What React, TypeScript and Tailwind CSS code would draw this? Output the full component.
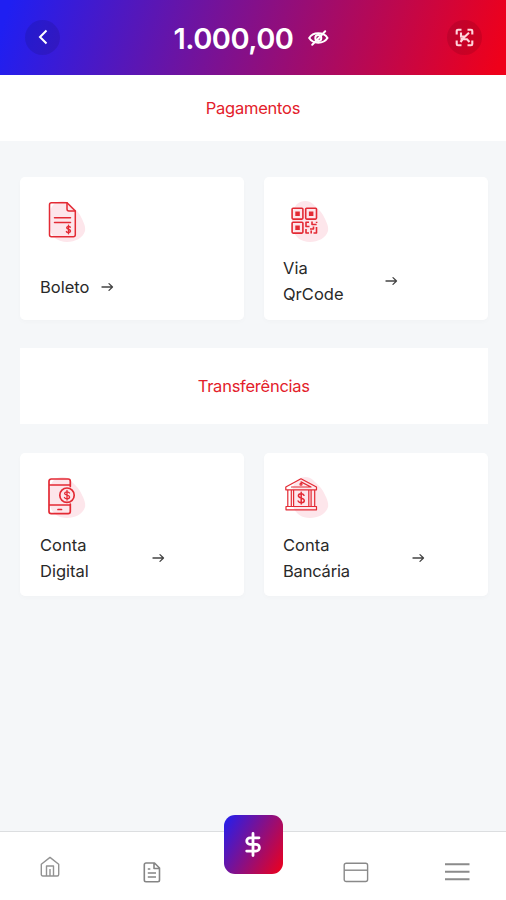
import type { ReactNode } from "react";

interface ActionCardProps {
  icon: ReactNode;
  label: ReactNode;
  labelClass: string;
  className: string;
  rowClass: string;
}

function ArrowIcon() {
  return (
    <svg width="13" height="12" viewBox="0 0 13 12" fill="none" stroke="#444" strokeWidth="1.3" strokeLinecap="round" strokeLinejoin="round">
      <path d="M1 6H11.4M8 2.6L11.5 6L8 9.4" />
    </svg>
  );
}

// soft pink shape that sits behind every card icon
function Blob() {
  return <path fill="#fde6eb" stroke="none" d="M14 7C19 3 26 3 30 7C34 11 37 13 40 18C43 24 46 29 45 34C43 41 35 45 27 45C18 45 12 40 10 33C8 26 8 13 14 7Z" />;
}

function IconFrame({ children }: { children: ReactNode }) {
  return (
    <svg width="48" height="48" viewBox="0 0 48 48" fill="none" stroke="#e32a34" strokeWidth="1.5" strokeLinecap="round" strokeLinejoin="round">
      <Blob />
      {children}
    </svg>
  );
}

function BillIcon() {
  return (
    <IconFrame>
      <path d="M11.5 5.7H27L35.3 14V37.8A2 2 0 0 1 33.3 39.8H11.5A2 2 0 0 1 9.5 37.8V7.7A2 2 0 0 1 11.5 5.7Z" />
      <path d="M27 5.7V12A2 2 0 0 0 29 14H35.3" />
      <path d="M14.5 20.8H30.5M14.5 25.6H30.5" />
      <path strokeWidth="1.4" d="M30.3 30.2C29.6 29 26.7 29 26.7 30.8C26.7 32.7 30.5 31.8 30.5 34C30.5 35.8 27.2 36 26.4 34.6M28.5 28.3V36.8" />
    </IconFrame>
  );
}

function QrIcon() {
  return (
    <IconFrame>
      <g strokeWidth="1.6">
        <rect x="9.1" y="11.3" width="10.8" height="10.8" rx="1" />
        <rect x="22.7" y="11.3" width="10.8" height="10.8" rx="1" />
        <rect x="9.1" y="25.3" width="10.8" height="10.8" rx="1" />
      </g>
      <g fill="#e32a34" stroke="none">
        <rect x="12.3" y="14.5" width="4.5" height="4.5" />
        <rect x="25.9" y="14.5" width="4.5" height="4.5" />
        <rect x="12.3" y="28.5" width="4.5" height="4.5" />
      </g>
      <path strokeWidth="1.6" strokeLinecap="butt" d="M26 25.3H23V29.5H26.5M23 32V36H26M29 24.6V27.5H33.6M33.6 24.8V26M33.5 30V36H30.5M27 32H30.5V29.5M28.2 33.5V36.6" />
    </IconFrame>
  );
}

function PhoneIcon() {
  return (
    <IconFrame>
      <path strokeWidth="1.7" d="M30.3 13.5V8.2A2.2 2.2 0 0 0 28.1 6H11.2A2.2 2.2 0 0 0 9 8.2V38.4A2.2 2.2 0 0 0 11.2 40.6H28.1A2.2 2.2 0 0 0 30.3 38.4V31M9 12H30M9 32H30M18 36.5H21.5" />
      <circle cx="27" cy="22.2" r="7.2" fill="#fde6eb" strokeWidth="1.7" />
      <path strokeWidth="1.3" d="M29.5 20C28.5 18.3 24.6 18.4 24.6 20.5C24.6 22.7 29.6 21.6 29.6 24.1C29.6 26.3 25.4 26.3 24.4 24.5M27 17.5V27" />
    </IconFrame>
  );
}

function BankIcon() {
  return (
    <IconFrame>
      <path strokeWidth="1.2" d="M2.8 14L18 5.8L33.5 14V16.8H2.8ZM8.5 14H28L18 8.9M3 33.5H33.5V36.8H3ZM4.8 16.8V33.3M8.3 16.8V33.3M10.6 16.8V33.3M25.8 16.8V33.3M28.1 16.8V33.3M31.7 16.8V33.3" />
      <circle cx="18" cy="11.2" r="1" strokeWidth="1.2" />
      <path strokeWidth="1.5" d="M21 22.3C19.8 20 15.4 20.2 15.4 22.8C15.4 25.9 21.3 24.3 21.3 27.6C21.3 30.5 16.3 30.5 15.1 28M18.2 19.3V31" />
    </IconFrame>
  );
}

function ActionCard({ icon, label, labelClass, className, rowClass }: ActionCardProps) {
  return (
    <div className={`h-[143px] rounded-[5px] bg-white pt-5 shadow-[0_2px_5px_rgba(0,0,0,0.02)] ${className}`}>
      {icon}
      <div className={`flex items-center ${rowClass}`}>
        <p className={`leading-[26px] text-[16.5px] text-[#292929] ${labelClass}`}>{label}</p>
        <ArrowIcon />
      </div>
    </div>
  );
}

function Header() {
  return (
    <header className="flex h-[74.5px] items-center justify-between bg-[linear-gradient(108deg,#1f1ff2_2%,#ef001a_98%)] pl-[25px] pr-[24px]">
      <button className="flex size-[35px] items-center justify-center rounded-full bg-black/10">
        <svg width="10" height="16" viewBox="0 0 10 16" fill="none" stroke="white" strokeWidth="2">
          <path d="M8.5 1.5L2 8L8.5 14.5" />
        </svg>
      </button>
      <div className="mr-[5px] flex items-center gap-[15px] pt-[2px] text-white">
        <span className="w-[119px] whitespace-nowrap text-[29px] font-semibold leading-none tracking-[-0.5px]">1.000,00</span>
        <svg width="21" height="18" viewBox="0 0 21 18" fill="none" stroke="white" strokeWidth="2" strokeLinecap="round">
          <path d="M1.2 9C5 2.8 15.5 2.8 19.5 9C15.5 15.2 5 15.2 1.2 9Z" />
          <circle cx="10.3" cy="9" r="3" />
          <path d="M4.2 15.8L17.2 2.2" />
        </svg>
      </div>
      <button className="flex size-[35px] items-center justify-center rounded-full bg-black/10">
        <svg width="19" height="19" viewBox="0 0 19 19" fill="none" stroke="#ffd5dc" strokeWidth="2.1">
          <path d="M6.5 1.7H3A1.3 1.3 0 0 0 1.7 3V6.5M12.5 1.7H16A1.3 1.3 0 0 1 17.3 3V6.5M6.5 17.3H3A1.3 1.3 0 0 1 1.7 16V12.5M12.5 17.3H16A1.3 1.3 0 0 0 17.3 16V12.5" />
          <path d="M6 4.5V8.5H9.5M14 4.8L9 9.5L5.5 14M8.5 11.2H12L14.5 14M5.5 10.8H9" />
        </svg>
      </button>
    </header>
  );
}

function BottomNav() {
  return (
    <nav className="grid h-[69.5px] grid-cols-5 justify-items-center border-t border-[#dcdee0] bg-white">
      <svg className="mr-px mt-[24px]" width="20" height="22" viewBox="0 0 20 22" fill="none" stroke="#929292" strokeWidth="1.4" strokeLinejoin="round">
        <path d="M2.8 20A1.5 1.5 0 0 1 1.3 18.5V8.2L10 1.4L18.7 8.2V18.5A1.5 1.5 0 0 1 17.2 20ZM6.5 20V10H13.5V20M10 13V20" />
      </svg>
      <svg className="mt-[30px]" width="18" height="21" viewBox="0 0 18 21" fill="none" stroke="#858585" strokeWidth="1.6" strokeLinejoin="round">
        <path d="M3 1H11.5L16.5 6V18A1.7 1.7 0 0 1 14.8 19.7H3A1.7 1.7 0 0 1 1.3 18V2.7A1.7 1.7 0 0 1 3 1ZM11 1V6.5H16.5M4.8 7H7.3M4.8 11H13M4.8 15H13" />
      </svg>
      <button className="ml-px -mt-[16.5px] flex h-[59px] w-[59px] items-center justify-center rounded-[11px] bg-[linear-gradient(120deg,#1f1ff2_0%,#f10018_100%)]">
        <svg width="18" height="27" viewBox="0 0 18 27" fill="none" stroke="white" strokeWidth="2.8" strokeLinecap="round">
          <path d="M15 6.8H6A3.2 3.2 0 0 0 6 13.3H12A3.3 3.3 0 0 1 12 20.1H2.7M9 2.5V24.5" />
        </svg>
      </button>
      <svg className="ml-[3px] mt-[30px]" width="26" height="21" viewBox="0 0 26 21" fill="none" stroke="#898989" strokeWidth="1.4">
        <rect x="1.2" y="1.2" width="23.4" height="18.3" rx="2" />
        <path d="M1.2 8.2H24.6" />
      </svg>
      <svg className="ml-[3px] mt-[30px]" width="26" height="20" viewBox="0 0 26 20" fill="none" stroke="#8b8b8b" strokeWidth="2">
        <path d="M1 2.2H25.5M1 9.7H25.5M1 17.2H25.5" />
      </svg>
    </nav>
  );
}

function App() {
  return (
    <div className="flex h-[900px] w-[506px] flex-col overflow-hidden bg-[#f5f7f9] font-['Inter','Liberation_Sans',sans-serif]">
      <Header />
      <h2 className="flex h-[66px] items-center justify-center bg-white pt-[2px] text-[16.5px] tracking-[-0.25px] text-[#e3202a]">Pagamentos</h2>
      <main className="flex-1 pl-5 pr-[18.5px] pt-[36px]">
        <section className="grid grid-cols-2 gap-x-[20.5px]">
          <ActionCard className="pl-5" icon={<BillIcon />} label="Boleto" labelClass="w-[61px]" rowClass="mt-[29px]" />
          <ActionCard
            className="pl-[19px]"
            icon={<QrIcon />}
            label={<>Via<br />QrCode</>}
            labelClass="w-[102px]"
            rowClass="mt-[10.5px]"
          />
        </section>
        <h2 className="mt-[28px] flex h-[76px] items-center justify-center bg-white pt-[2px] text-[16.5px] tracking-[-0.25px] text-[#e3202a]">Transferências</h2>
        <section className="mt-[29px] grid grid-cols-2 gap-x-[20.5px]">
          <ActionCard
            className="pl-5"
            icon={<PhoneIcon />}
            label={<>Conta<br />Digital</>}
            labelClass="w-[112px]"
            rowClass="mt-[11px]"
          />
          <ActionCard
            className="pl-[19px]"
            icon={<BankIcon />}
            label={<>Conta<br /><span className="tracking-[-0.2px]">Bancária</span></>}
            labelClass="w-[129px]"
            rowClass="mt-[11px]"
          />
        </section>
      </main>
      <BottomNav />
    </div>
  );
}

export default App;
